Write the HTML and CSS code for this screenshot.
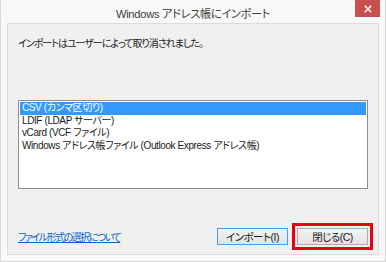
FILE: index.html
```html
<!DOCTYPE html>
<html lang="ja">

<head>
  <meta charset="UTF-8">
  <link rel="stylesheet" href="styles.css">
</head>

<body>
  <div class="window">
    <header class="titlebar">
      <span></span>
      <h1 class="titlebar__title">Windows アドレス帳にインポート</h1>
      <button class="titlebar__close" aria-label="閉じる">
        <svg viewBox="0 0 10 10" width="8" height="8">
          <path d="M1 1 L9 9 M9 1 L1 9" stroke="#fff" stroke-width="1.8" />
        </svg>
      </button>
    </header>

    <main class="panel">
      <p class="panel__message">インポートはユーザーによって取り消されました。</p>

      <ul class="list">
        <li class="list__item list__item--selected">CSV (カンマ区切り)</li>
        <li class="list__item">LDIF (LDAP サーバー)</li>
        <li class="list__item">vCard (VCF ファイル)</li>
        <li class="list__item">Windows アドレス帳ファイル (Outlook Express アドレス帳)</li>
      </ul>

      <footer class="actions">
        <a class="actions__link" href="#">ファイル形式の選択について</a>
        <div class="actions__buttons">
          <button class="btn btn--default">インポート(I)</button>
          <span class="highlight">
            <button class="btn">閉じる(C)</button>
          </span>
        </div>
      </footer>
    </main>
  </div>
</body>

</html>
```

FILE: styles.css
```css
* {
  box-sizing: border-box;
}

body {
  margin: 0;
  width: 386px;
  height: 262px;
  font-family: "Liberation Sans", "Noto Sans CJK JP", sans-serif;
  font-feature-settings: "palt";
  color: #1a1a1a;
}

.window {
  display: flex;
  flex-direction: column;
  width: 386px;
  height: 262px;
  padding: 0 6px 6px;
  background-color: #f8f8f8;
  border: 1px solid #d8d8d8;
  border-top: 0;
}

.titlebar {
  display: grid;
  grid-template-columns: 1fr auto 1fr;
  align-items: start;
  height: 23px;
  flex: 0 0 auto;
}

.titlebar__title {
  margin: 5px 0 0;
  font-size: 11.2px;
  font-weight: 400;
  letter-spacing: -0.3px;
  color: #3c3c3c;
  white-space: nowrap;
}

.titlebar__close {
  justify-self: end;
  display: flex;
  align-items: center;
  justify-content: center;
  width: 25px;
  height: 17px;
  margin-right: -1px;
  padding: 0;
  border: 0;
  background-color: #c94f4f;
}

.panel {
  flex: 1 1 auto;
  display: flex;
  flex-direction: column;
  padding: 11px 10px 4px 10px;
  background-color: #f0f0f0;
  border: 1px solid #dcdcdc;
}

.panel__message {
  margin: 0 0 50px;
  font-size: 10px;
  letter-spacing: -1px;
}

.list {
  list-style: none;
  margin: 0;
  padding: 1px;
  height: 89px;
  background-color: #fff;
  border: 1px solid #8e8f8f;
  font-size: 10px;
  letter-spacing: -0.4px;
}

.list__item {
  height: 12.5px;
  line-height: 12px;
  padding-left: 2px;
  white-space: nowrap;
}

.list__item--selected {
  background-color: #3399ff;
  color: #fff;
}

.actions {
  margin-top: auto;
  display: flex;
  align-items: center;
  justify-content: space-between;
  font-size: 10px;
}

.actions__link {
  color: #0a63c8;
  text-decoration: underline;
  letter-spacing: -1.5px;
}

.actions__buttons {
  display: flex;
  align-items: center;
  gap: 4px;
  margin-right: -5px;
}

.btn {
  width: 71px;
  height: 17px;
  padding: 0;
  font: inherit;
  font-size: 10.5px;
  letter-spacing: -0.5px;
  color: #1a1a1a;
  background: linear-gradient(#f2f2f2, #e3e3e3);
  border: 1px solid #acacac;
}

.btn--default {
  border-color: #4d9be0;
}

.highlight {
  display: flex;
  padding: 2px;
  border: 3px solid #e60012;
}
```
